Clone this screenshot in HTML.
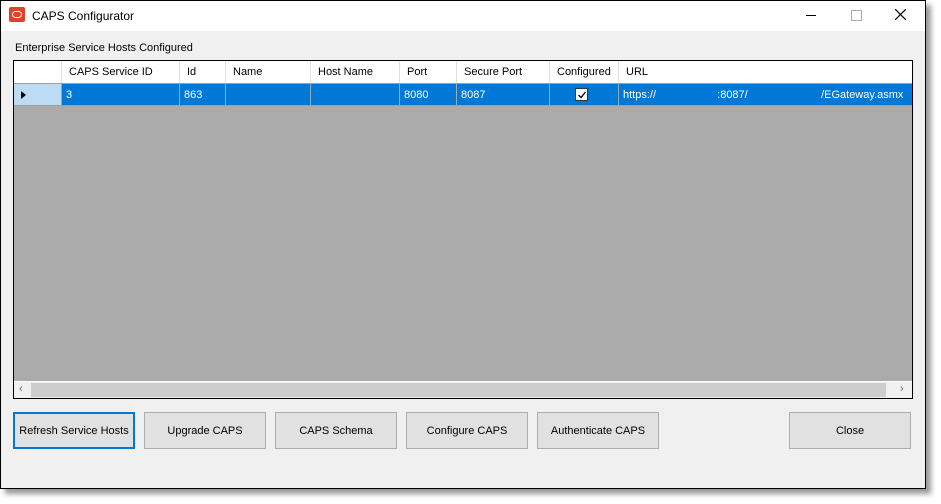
<!DOCTYPE html>
<html><head><style>
body{margin:0;width:941px;height:504px;background:#fff;position:relative;overflow:hidden;font-family:"Liberation Sans",sans-serif;font-size:11px;color:#000}
.win{position:absolute;left:0;top:0;width:924px;height:487px;border:1px solid #000;background:#f0f0f0;box-shadow:5px 5px 5px #999}
.title{position:absolute;left:0;top:0;width:924px;height:30px;background:#fff}
.abs{position:absolute}
.grid{position:absolute;left:12px;top:59px;width:898px;height:337px;border:1px solid #000;background:#ababab;overflow:hidden}
.hdr{position:absolute;top:0;height:22px;background:#fff;border-right:1px solid #e0e0e0;line-height:23px;padding-left:7px;box-sizing:border-box}
.cell{position:absolute;top:23px;height:21px;background:#0078d7;color:#fff;border-right:1px solid #9ab;line-height:22px;padding-left:4px;box-sizing:border-box}
.btn{position:absolute;top:411px;width:122px;height:37px;background:#e1e1e1;border:1px solid #adadad;box-sizing:border-box;text-align:center;line-height:36px;font-size:11px}
</style></head><body>
<div class="win">
<div class="title">
 <div class="abs" style="left:8px;top:6px;width:16px;height:15px;background:#e0412a;border-radius:2px"><div class="abs" style="left:3px;top:4px;width:8px;height:5px;border:1.5px solid #fff;border-radius:4px"></div></div>
 <div class="abs" style="left:31px;top:8px;font-size:12px">CAPS Configurator</div>
 <div class="abs" style="left:805px;top:14px;width:10px;height:1px;background:#000"></div>
 <div class="abs" style="left:850px;top:9px;width:9px;height:9px;border:1px solid #aaa"></div>
 <svg class="abs" style="left:894px;top:8px" width="11" height="11"><path d="M0 0L11 11M11 0L0 11" stroke="#000" stroke-width="1.2"/></svg>
</div>
<div class="abs" style="left:14px;top:41px">Enterprise Service Hosts Configured</div>
<div class="grid">
 <div class="hdr" style="left:0;width:48px"></div>
 <div class="hdr" style="left:48px;width:118px">CAPS Service ID</div>
 <div class="hdr" style="left:166px;width:46px">Id</div>
 <div class="hdr" style="left:212px;width:85px">Name</div>
 <div class="hdr" style="left:297px;width:89px">Host Name</div>
 <div class="hdr" style="left:386px;width:57px">Port</div>
 <div class="hdr" style="left:443px;width:93px">Secure Port</div>
 <div class="hdr" style="left:536px;width:69px">Configured</div>
 <div class="hdr" style="left:605px;width:293px;border-right:0">URL</div>
 <div class="abs" style="left:0;top:22px;width:898px;height:1px;background:#a0a0a0"></div>
 <div class="cell" style="left:0;width:48px;background:#bcdcf4;border-right:1px solid #a0a0a0"><svg class="abs" style="left:7px;top:7px" width="5" height="8"><path d="M0 0L5 4L0 8Z" fill="#000"/></svg></div>
 <div class="cell" style="left:48px;width:118px">3</div>
 <div class="cell" style="left:166px;width:46px">863</div>
 <div class="cell" style="left:212px;width:85px"></div>
 <div class="cell" style="left:297px;width:89px"></div>
 <div class="cell" style="left:386px;width:57px">8080</div>
 <div class="cell" style="left:443px;width:93px">8087</div>
 <div class="cell" style="left:536px;width:69px"><div class="abs" style="left:25px;top:4px;width:13px;height:13px;background:#fff;border:1px solid #333;box-sizing:border-box"><svg class="abs" style="left:1px;top:1px" width="10" height="10"><path d="M1.5 5L4 7.5L8.5 2" stroke="#000" fill="none" stroke-width="1.3"/></svg></div></div>
 <div class="cell" style="left:605px;width:293px;border-right:0;white-space:pre">https://                    :8087/                        /EGateway.asmx</div>
 <div class="abs" style="left:0;top:44px;width:898px;height:1px;background:#a0a0a0"></div>
 <div class="abs" style="left:0;top:320px;width:898px;height:17px;background:#f0f0f0;border-top:1px solid #fff"><div class="abs" style="left:17px;top:1px;width:855px;height:14px;background:#cdcdcd"></div><span class="abs" style="left:5px;top:1px;color:#666">‹</span><span class="abs" style="left:886px;top:1px;color:#666">›</span></div>
</div>
<div class="btn" style="left:12px;border:2px solid #0078d7;line-height:34px">Refresh Service Hosts</div>
<div class="btn" style="left:143px">Upgrade CAPS</div>
<div class="btn" style="left:274px">CAPS Schema</div>
<div class="btn" style="left:405px">Configure CAPS</div>
<div class="btn" style="left:536px">Authenticate CAPS</div>
<div class="btn" style="left:788px">Close</div>
</div>
</body></html>
